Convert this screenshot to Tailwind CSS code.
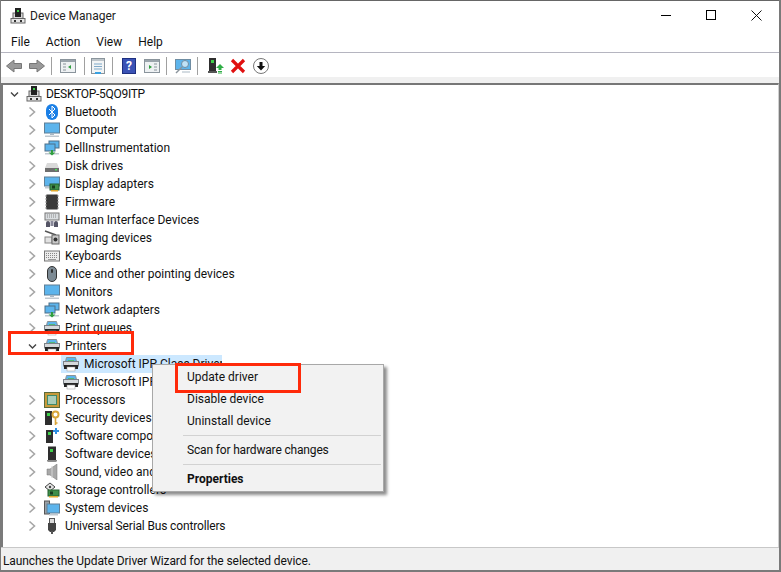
<!DOCTYPE html>
<html lang="en">
<head>
<meta charset="UTF-8">
<title>Device Manager</title>
<script src="https://cdn.jsdelivr.net/npm/@tailwindcss/browser@4"></script>
</head>
<body class="bg-white font-['Roboto','Noto_Sans',sans-serif] text-[12px] leading-[18px] text-[#111] overflow-hidden">
<svg width="0" height="0" class="absolute">
  <defs>
    <symbol id="chev" viewBox="0 0 10 12"><path d="M2.500 1.500 7.500 6 2.500 10.500" fill="none" stroke="#a6a6a6" stroke-width="1.600"/></symbol>
    <symbol id="tower" viewBox="0 0 16 16"><rect x="3" y="5" width="10" height="8" fill="#d8d8d8" stroke="#666"/><rect x="5" y="0" width="6" height="9" fill="#222"/><rect x="7" y="2" width="2" height="2" fill="#3fd04a"/><rect x="1" y="10.500" width="14" height="4.500" fill="#e6e6e6" stroke="#666"/><rect x="4" y="12" width="2" height="2" fill="#333"/><rect x="10" y="12" width="2" height="2" fill="#333"/></symbol>
    <symbol id="monitor" viewBox="0 0 16 16"><rect x="0.500" y="1" width="15" height="10" fill="#5cb4ec" stroke="#5f7f96"/><rect x="6" y="11" width="4" height="2" fill="#a9b8c4"/><rect x="1" y="13.500" width="14" height="1.500" fill="#bfc8cf"/></symbol>
    <symbol id="net" viewBox="0 0 16 16"><rect x="5" y="1" width="10" height="7" fill="#5cb4ec" stroke="#4c6f88"/><rect x="1" y="4" width="10" height="7" fill="#5cb4ec" stroke="#4c6f88"/><rect x="1" y="13" width="14" height="1.500" fill="#bfc8cf"/><path d="M8 15.500 4.500 12.500H7V10h2v2.500h2.500z" fill="#2f9e3f"/></symbol>
    <symbol id="disk" viewBox="0 0 16 16"><path d="M3 5h10l2 5H1z" fill="#d9d9d9"/><rect x="1" y="10" width="14" height="4" fill="#6e6e6e"/><rect x="11" y="11" width="2" height="1.500" fill="#4fe05a"/></symbol>
    <symbol id="display" viewBox="0 0 16 16"><rect x="0.500" y="1" width="15" height="9" fill="#5cb4ec" stroke="#5f7f96"/><rect x="1" y="11" width="7" height="1.500" fill="#bfc8cf"/><rect x="6" y="8" width="9" height="6" fill="#3f8f4a" stroke="#24602e"/><rect x="8" y="9.500" width="3" height="3" fill="#183d1e"/><rect x="7" y="14" width="7" height="1.500" fill="#e0a92e"/></symbol>
    <symbol id="chip" viewBox="0 0 16 16"><rect x="2" y="0.500" width="12" height="15" rx="1" fill="#3a3a3a"/><path d="M1 2h2M1 5h2M1 8h2M1 11h2M1 14h2M13 2h2M13 5h2M13 8h2M13 11h2M13 14h2" stroke="#999"/></symbol>
    <symbol id="hid" viewBox="0 0 16 16"><rect x="1" y="1" width="14" height="7" fill="#d9dde0" stroke="#777"/><path d="M3 3h10M3 5h10" stroke="#888" stroke-dasharray="1 1"/><path d="M2 15v-4a2 2 0 0 1 4 0v4zM10 15v-4a2 2 0 0 1 4 0v4z" fill="#556"/><rect x="6.500" y="9" width="3" height="5" fill="#889"/></symbol>
    <symbol id="camera" viewBox="0 0 16 16"><path d="M1 1 12 5" stroke="#555" stroke-width="1.500"/><rect x="1" y="7" width="7" height="6" fill="#e2e2e2" stroke="#888"/><rect x="8" y="5" width="7" height="9" fill="#c9c9c9" stroke="#666"/><circle cx="11.500" cy="9.500" r="2" fill="#333"/></symbol>
    <symbol id="kbd" viewBox="0 0 16 16"><rect x="0.500" y="3" width="15" height="10" fill="#ececec" stroke="#777"/><path d="M2 5.500h12M2 7.500h12M2 9.500h12" stroke="#888" stroke-dasharray="1 1"/><rect x="4" y="11" width="8" height="1" fill="#999"/></symbol>
    <symbol id="mouse" viewBox="0 0 16 16"><rect x="3.500" y="0.500" width="9" height="15" rx="4.500" fill="#7c8a94" stroke="#333"/><rect x="7" y="3" width="2" height="4" rx="1" fill="#333"/></symbol>
    <symbol id="printer" viewBox="0 0 16 16"><path d="M3.500 1.500h9l1 4h-11z" fill="#5cb4ec" stroke="#8a9298"/><rect x="5" y="4" width="6" height="1" fill="#4fb87a"/><rect x="0.500" y="5.500" width="15" height="4.500" fill="#d5d9dc" stroke="#7b8288"/><rect x="1" y="9" width="14" height="4" fill="#262626"/><rect x="4" y="11" width="8" height="4" fill="#fff" stroke="#999" stroke-width=".5"/></symbol>
    <symbol id="cpu" viewBox="0 0 16 16"><rect x="0.500" y="0.500" width="15" height="15" fill="#c79a3a" stroke="#5a6a3a"/><rect x="3" y="3" width="10" height="10" fill="#3f8a68"/><rect x="4" y="4" width="8" height="8" fill="#a9cdb9"/></symbol>
    <symbol id="key" viewBox="0 0 16 16"><rect x="1" y="1" width="7" height="14" fill="#2e2e2e"/><rect x="3" y="3" width="3" height="3" fill="#3fd04a"/><circle cx="11.500" cy="4.500" r="3" fill="none" stroke="#d9a53a" stroke-width="2"/><path d="M11.500 7v8M11.500 13h2" stroke="#d9a53a" stroke-width="1.600"/></symbol>
    <symbol id="swcomp" viewBox="0 0 16 16"><rect x="2" y="2" width="7" height="13" fill="#2e2e2e"/><rect x="4" y="4" width="3" height="3" fill="#3fd04a"/><path d="M11 0h2v2h2v2h-2v2h-2V4H9V2h2z" fill="#2f8fe0"/></symbol>
    <symbol id="swdev" viewBox="0 0 16 16"><rect x="4" y="0.500" width="8" height="15" fill="#2e2e2e"/><rect x="6" y="3" width="3" height="3" fill="#3fd04a"/><rect x="3" y="14" width="10" height="1.500" fill="#888"/></symbol>
    <symbol id="sound" viewBox="0 0 16 16"><path d="M3 5h3l7-5v16l-7-5H3z" fill="#a8a8a8" stroke="#777" stroke-width=".5"/><path d="M8 2v12" stroke="#d6d6d6"/></symbol>
    <symbol id="storage" viewBox="0 0 16 16"><path d="M1 5 6 1l5 4-5 4z" fill="#e4e4e4" stroke="#444"/><circle cx="6" cy="5" r="1.200" fill="#444"/><rect x="4" y="8" width="11" height="6" fill="#3f8f4a" stroke="#24602e"/><rect x="6" y="9.500" width="3" height="3" fill="#183d1e"/><rect x="5" y="14" width="9" height="1.500" fill="#e0a92e"/></symbol>
    <symbol id="system" viewBox="0 0 16 16"><rect x="0.500" y="1" width="5" height="13" fill="#9aa0a5" stroke="#555"/><rect x="3" y="4" width="12.500" height="9" fill="#5cb4ec" stroke="#5f7f96"/><rect x="5" y="14" width="9" height="1.500" fill="#bfc8cf"/></symbol>
    <symbol id="usb" viewBox="0 0 16 16"><rect x="5.500" y="0.500" width="5" height="5" fill="#ddd" stroke="#555"/><path d="M4 5h8v7l-2 2H6l-2-2z" fill="#444"/><rect x="7" y="13" width="2" height="3" fill="#555"/></symbol>
  </defs>
</svg>

<div class="w-[781px] h-[572px] relative flex flex-col border-l border-r-2 border-b-2 border-[#7a7a7a] overflow-hidden">
  <!-- title bar -->
  <div class="h-[31px] flex items-center border-t border-[#666] shrink-0">
    <svg class="w-4 h-4 ml-[9px]"><use href="#tower"/></svg>
    <span class="ml-[4px] text-[#222]">Device Manager</span>
    <div class="ml-auto flex items-center mr-[17px] gap-[35px] mb-[2px]">
      <div class="w-[10px] h-[1px] bg-black"></div>
      <div class="w-[10px] h-[10px] border border-black"></div>
      <svg class="w-[11px] h-[11px]" viewBox="0 0 11 11"><path d="M.5.5l10 10M10.500.5l-10 10" stroke="#111" fill="none"/></svg>
    </div>
  </div>
  <!-- menu -->
  <div class="h-[22px] flex items-center gap-[16px] pl-[10px] border-b border-[#b5b5c0] shrink-0">
    <span>File</span><span>Action</span><span>View</span><span>Help</span>
  </div>
  <!-- toolbar -->
  <div class="h-[24px] flex items-center pl-[5px] pt-[1px] shrink-0">
    <svg class="w-4 h-4" viewBox="0 0 16 16"><path d="M.5 8 8 2V5.500h7.500v5H8V14z" fill="#9a9a9a" stroke="#777"/></svg>
    <svg class="w-4 h-4 ml-[7px]" viewBox="0 0 16 16"><path d="M15.500 8 8 2V5.500H.5v5H8V14z" fill="#9a9a9a" stroke="#777"/></svg>
    <div class="w-px h-[18px] bg-[#a0a0a0] ml-[6px]"></div>
    <svg class="w-4 h-4 ml-[8px]" viewBox="0 0 16 16"><rect x=".5" y="1.500" width="15" height="13" fill="#eef1f3" stroke="#8a949c"/><rect x="1" y="2" width="14" height="2" fill="#9aa4ac"/><path d="M11 7 8 9l3 2z" fill="#2f9e3f"/><path d="M3 6h3M3 9h3M3 12h3" stroke="#8a949c"/></svg>
    <div class="w-px h-[18px] bg-[#a0a0a0] ml-[8px]"></div>
    <svg class="w-4 h-4 ml-[5px]" viewBox="0 0 16 16"><rect x="1.500" y=".5" width="13" height="15" fill="#f2f4f5" stroke="#8a949c"/><rect x="2" y="1" width="12" height="2" fill="#bcc4ca"/><path d="M4 6h8M4 8.500h8M4 11h8" stroke="#7fa9c9"/><rect x="5" y="14" width="6" height="2" fill="#39a0e0"/></svg>
    <div class="w-px h-[18px] bg-[#a0a0a0] ml-[6px]"></div>
    <div class="w-[14px] h-[16px] ml-[9px] bg-[#3a52b5] border border-[#1d2f80] text-white font-bold text-[12px] leading-[14px] text-center">?</div>
    <svg class="w-4 h-4 ml-[8px]" viewBox="0 0 16 16"><rect x=".5" y="1.500" width="15" height="13" fill="#eef1f3" stroke="#8a949c"/><rect x="1" y="2" width="14" height="2" fill="#9aa4ac"/><path d="M5 7l3 2-3 2z" fill="#2f9e3f"/><path d="M10 6h3M10 9h3M10 12h3" stroke="#8a949c"/></svg>
    <div class="w-px h-[18px] bg-[#a0a0a0] ml-[6px]"></div>
    <svg class="w-4 h-4 ml-[8px]" viewBox="0 0 16 16"><rect x=".5" y="1.500" width="15" height="10" fill="#5cb4ec" stroke="#6f8da3"/><circle cx="10" cy="6" r="3.500" fill="#bfe2f7" stroke="#6f8da3"/><path d="M7 9 1 15" stroke="#8a949c" stroke-width="1.500"/><path d="M7 14h8" stroke="#a9b8c4"/></svg>
    <div class="w-px h-[18px] bg-[#a0a0a0] ml-[6px]"></div>
    <svg class="w-4 h-4 ml-[10px]" viewBox="0 0 16 16"><rect x="1" y="0" width="7" height="13" fill="#2e2e2e"/><rect x="3" y="2" width="3" height="3" fill="#3fd04a"/><rect x="0" y="13" width="9" height="2" fill="#555"/><path d="M12 6l4 4h-2.500v2h-3v-2H8z" fill="#2fae45"/><path d="M10 13.500h4M10 15h4" stroke="#2fae45"/></svg>
    <svg class="w-4 h-4 ml-[6px]" viewBox="0 0 16 16"><path d="M2 2 14 14M14 2 2 14" stroke="#e01010" stroke-width="3.200"/></svg>
    <svg class="w-4 h-4 ml-[7px]" viewBox="0 0 16 16"><circle cx="8" cy="8" r="7.500" fill="#fff" stroke="#777"/><path d="M8 12.500 3.800 8H6.500V4h3v4h2.700z" fill="#111"/></svg>
  </div>
  <!-- band above the tree -->
  <div class="h-[6px] bg-[#f0f0f0] shrink-0"></div>
  <!-- tree -->
  <div class="flex-1 border-l-2 border-l-[#7a7a7a] border-t-2 border-t-[#777] border-r border-r-[#d0d0d0] min-h-0">
    <div class="h-[18px] flex items-center pl-[7px]">
      <svg class="w-[9px] h-[9px]" viewBox="0 0 9 9"><path d="M1 2.500 4.500 6 8 2.500" fill="none" stroke="#444" stroke-width="1.400"/></svg>
      <svg class="w-4 h-4 ml-[7px]"><use href="#tower"/></svg>
      <span class="ml-[4px] tracking-[-0.3px]">DESKTOP-5QO9ITP</span>
    </div>
    <div class="h-[18px] flex items-center pl-[24px]"><svg class="w-[10px] h-3"><use href="#chev"/></svg><svg class="w-4 h-4 ml-[7px]" viewBox="0 0 16 16"><rect x="2" y="0" width="12" height="16" rx="6" fill="#1a7fe6"/><path d="M5 5l6 6-3 3V2l3 3-6 6" fill="none" stroke="#fff"/></svg><span class="ml-[5px]">Bluetooth</span></div>
    <div class="h-[18px] flex items-center pl-[24px]"><svg class="w-[10px] h-3"><use href="#chev"/></svg><svg class="w-4 h-4 ml-[7px]"><use href="#monitor"/></svg><span class="ml-[5px]">Computer</span></div>
    <div class="h-[18px] flex items-center pl-[24px]"><svg class="w-[10px] h-3"><use href="#chev"/></svg><svg class="w-4 h-4 ml-[7px]"><use href="#net"/></svg><span class="ml-[5px]">DellInstrumentation</span></div>
    <div class="h-[18px] flex items-center pl-[24px]"><svg class="w-[10px] h-3"><use href="#chev"/></svg><svg class="w-4 h-4 ml-[7px]"><use href="#disk"/></svg><span class="ml-[5px]">Disk drives</span></div>
    <div class="h-[18px] flex items-center pl-[24px]"><svg class="w-[10px] h-3"><use href="#chev"/></svg><svg class="w-4 h-4 ml-[7px]"><use href="#display"/></svg><span class="ml-[5px]">Display adapters</span></div>
    <div class="h-[18px] flex items-center pl-[24px]"><svg class="w-[10px] h-3"><use href="#chev"/></svg><svg class="w-4 h-4 ml-[7px]"><use href="#chip"/></svg><span class="ml-[5px]">Firmware</span></div>
    <div class="h-[18px] flex items-center pl-[24px]"><svg class="w-[10px] h-3"><use href="#chev"/></svg><svg class="w-4 h-4 ml-[7px]"><use href="#hid"/></svg><span class="ml-[5px]">Human Interface Devices</span></div>
    <div class="h-[18px] flex items-center pl-[24px]"><svg class="w-[10px] h-3"><use href="#chev"/></svg><svg class="w-4 h-4 ml-[7px]"><use href="#camera"/></svg><span class="ml-[5px]">Imaging devices</span></div>
    <div class="h-[18px] flex items-center pl-[24px]"><svg class="w-[10px] h-3"><use href="#chev"/></svg><svg class="w-4 h-4 ml-[7px]"><use href="#kbd"/></svg><span class="ml-[5px]">Keyboards</span></div>
    <div class="h-[18px] flex items-center pl-[24px]"><svg class="w-[10px] h-3"><use href="#chev"/></svg><svg class="w-4 h-4 ml-[7px]"><use href="#mouse"/></svg><span class="ml-[5px]">Mice and other pointing devices</span></div>
    <div class="h-[18px] flex items-center pl-[24px]"><svg class="w-[10px] h-3"><use href="#chev"/></svg><svg class="w-4 h-4 ml-[7px]"><use href="#monitor"/></svg><span class="ml-[5px]">Monitors</span></div>
    <div class="h-[18px] flex items-center pl-[24px]"><svg class="w-[10px] h-3"><use href="#chev"/></svg><svg class="w-4 h-4 ml-[7px]"><use href="#net"/></svg><span class="ml-[5px]">Network adapters</span></div>
    <div class="h-[18px] flex items-center pl-[24px]"><svg class="w-[10px] h-3"><use href="#chev"/></svg><svg class="w-4 h-4 ml-[7px]"><use href="#printer"/></svg><span class="ml-[5px]">Print queues</span></div>
    <div class="h-[18px] flex items-center pl-[25px]"><svg class="w-[9px] h-[9px]" viewBox="0 0 9 9"><path d="M1 2.500 4.500 6 8 2.500" fill="none" stroke="#444" stroke-width="1.400"/></svg><svg class="w-4 h-4 ml-[7px]"><use href="#printer"/></svg><span class="ml-[5px]">Printers</span></div>
    <div class="h-[18px] flex items-center ml-[58px] w-[161px] bg-[#cce8ff] pl-[2px] overflow-hidden"><svg class="w-4 h-4 shrink-0"><use href="#printer"/></svg><span class="ml-[5px] whitespace-nowrap">Microsoft IPP Class Driver</span></div>
    <div class="h-[18px] flex items-center ml-[58px] pl-[2px]"><svg class="w-4 h-4 shrink-0"><use href="#printer"/></svg><span class="ml-[5px] whitespace-nowrap">Microsoft IPP Class Driver</span></div>
    <div class="h-[18px] flex items-center pl-[24px]"><svg class="w-[10px] h-3"><use href="#chev"/></svg><svg class="w-4 h-4 ml-[7px]"><use href="#cpu"/></svg><span class="ml-[5px]">Processors</span></div>
    <div class="h-[18px] flex items-center pl-[24px]"><svg class="w-[10px] h-3"><use href="#chev"/></svg><svg class="w-4 h-4 ml-[7px]"><use href="#key"/></svg><span class="ml-[5px]">Security devices</span></div>
    <div class="h-[18px] flex items-center pl-[24px]"><svg class="w-[10px] h-3"><use href="#chev"/></svg><svg class="w-4 h-4 ml-[7px]"><use href="#swcomp"/></svg><span class="ml-[5px]">Software components</span></div>
    <div class="h-[18px] flex items-center pl-[24px]"><svg class="w-[10px] h-3"><use href="#chev"/></svg><svg class="w-4 h-4 ml-[7px]"><use href="#swdev"/></svg><span class="ml-[5px]">Software devices</span></div>
    <div class="h-[18px] flex items-center pl-[24px]"><svg class="w-[10px] h-3"><use href="#chev"/></svg><svg class="w-4 h-4 ml-[7px]"><use href="#sound"/></svg><span class="ml-[5px]">Sound, video and game controllers</span></div>
    <div class="h-[18px] flex items-center pl-[24px]"><svg class="w-[10px] h-3"><use href="#chev"/></svg><svg class="w-4 h-4 ml-[7px]"><use href="#storage"/></svg><span class="ml-[5px]">Storage controllers</span></div>
    <div class="h-[18px] flex items-center pl-[24px]"><svg class="w-[10px] h-3"><use href="#chev"/></svg><svg class="w-4 h-4 ml-[7px]"><use href="#system"/></svg><span class="ml-[5px]">System devices</span></div>
    <div class="h-[18px] flex items-center pl-[24px]"><svg class="w-[10px] h-3"><use href="#chev"/></svg><svg class="w-4 h-4 ml-[7px]"><use href="#usb"/></svg><span class="ml-[5px] tracking-[-0.15px]">Universal Serial Bus controllers</span></div>
  </div>
  <!-- status bar -->
  <div class="h-[23px] shrink-0 bg-[#f0f0f0] border-t border-[#c8c8c8] flex items-center pl-[2px] pt-[3px]">
    <span class="tracking-[-0.09px]">Launches the Update Driver Wizard for the selected device.</span>
  </div>

  <!-- context menu -->
  <div class="absolute left-[151px] top-[364px] w-[232px] h-[128px] bg-[#f2f2f2] border border-[#a8a8a8] shadow-[3px_3px_3px_rgba(0,0,0,0.45)] pt-[1px]">
    <div class="h-[22px] pl-[34px] flex items-center">Update driver</div>
    <div class="h-[22px] pl-[34px] flex items-center">Disable device</div>
    <div class="h-[22px] pl-[34px] flex items-center">Uninstall device</div>
    <div class="h-px bg-[#d2d2d2] ml-[30px] mr-[2px] my-[3px]"></div>
    <div class="h-[22px] pl-[34px] flex items-center tracking-[-0.16px]">Scan for hardware changes</div>
    <div class="h-px bg-[#d2d2d2] ml-[30px] mr-[2px] my-[3px]"></div>
    <div class="h-[22px] pl-[34px] flex items-center font-bold">Properties</div>
  </div>

  <!-- red callouts -->
  <div class="absolute left-[7px] top-[331px] w-[126px] h-[24px] border-[3px] border-[#ff2a0a]"></div>
  <div class="absolute left-[174px] top-[363px] w-[126px] h-[30px] border-[3px] border-[#ff2a0a]"></div>
</div>
</body>
</html>
